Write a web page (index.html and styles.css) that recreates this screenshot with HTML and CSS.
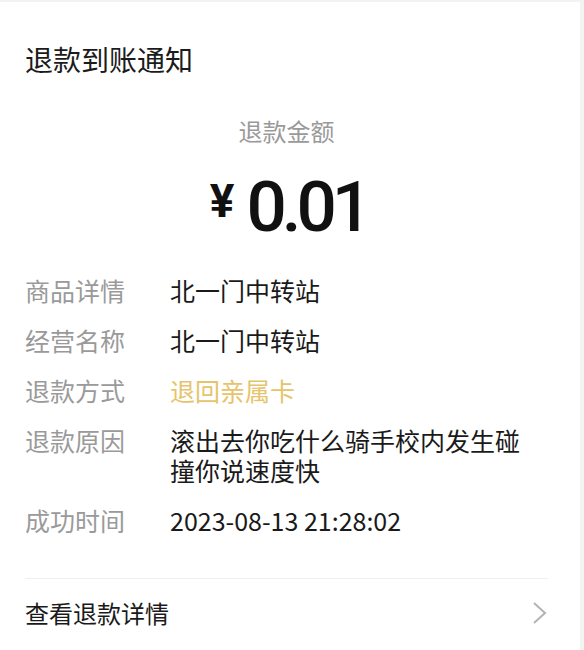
FILE: index.html
```html
<!DOCTYPE html>
<html>
<head>
    <meta charset="utf-8">
    <title>退款到账通知</title>
    <link rel="stylesheet" href="styles.css">
</head>
<body>
    <div class="card">
        <h2 class="title">退款到账通知</h2>

        <div class="amount-label">退款金额</div>
        <div class="amount">
            <span class="yen">¥</span>
            <span class="num">0.01</span>
        </div>

        <div class="rows">
            <div class="row">
                <div class="label">商品详情</div>
                <div class="value">北一门中转站</div>
            </div>
            <div class="row">
                <div class="label">经营名称</div>
                <div class="value">北一门中转站</div>
            </div>
            <div class="row">
                <div class="label">退款方式</div>
                <div class="value gold">退回亲属卡</div>
            </div>
            <div class="row">
                <div class="label">退款原因</div>
                <div class="value">滚出去你吃什么骑手校内发生碰撞你说速度快</div>
            </div>
            <div class="row">
                <div class="label">成功时间</div>
                <div class="value">2023-08-13 21:28:02</div>
            </div>
        </div>

        <div class="footer">
            <span>查看退款详情</span>
            <svg class="arrow" width="16" height="24" viewBox="0 0 16 24">
                <polyline points="2,2 13,12 2,22" fill="none" stroke="#b3b3b3" stroke-width="2"/>
            </svg>
        </div>
    </div>
</body>
</html>
```

FILE: styles.css
```css
body {
    margin: 0;
    background-color: #f3f3f3;
    font-family: "Noto Sans CJK SC", "Noto Sans", sans-serif;
}

.card {
    width: 580px;
    height: 648px;
    margin-top: 2px;
    background: #ffffff;
    box-sizing: border-box;
    padding: 37px 32px 0 25px;
}

.title {
    margin: 0;
    font-size: 28px;
    font-weight: normal;
    line-height: 40px;
    color: #1b1b1b;
}

.amount-label {
    margin-top: 37px;
    text-align: center;
    font-size: 24px;
    line-height: 30px;
    color: #9a9a9a;
}

.amount {
    display: flex;
    justify-content: center;
    align-items: center;
    height: 80px;
    margin-top: 21px;
    color: #111;
    font-family: Roboto, "Liberation Sans", sans-serif;
    font-weight: 500;
    padding-left: 4px;
}

.yen {
    font-size: 46px;
    font-weight: 700;
    line-height: 46px;
    margin-right: 12px;
    margin-bottom: 12px;
}

.num {
    font-size: 71px;
    line-height: 80px;
    letter-spacing: -5px;
}

.rows {
    margin-top: 28px;
}

.row {
    display: flex;
    font-size: 25px;
    line-height: 30px;
    margin-bottom: 20px;
}

.label {
    width: 145px;
    flex-shrink: 0;
    color: #9a9a9a;
}

.value {
    width: 372px;
    color: #1a1a1a;
}

.gold {
    color: #e6c46c;
}

.footer {
    display: flex;
    justify-content: space-between;
    align-items: center;
    margin-top: 43px;
    padding-top: 19px;
    border-top: 1px solid #efefef;
    font-size: 24px;
    line-height: 30px;
    color: #1a1a1a;
}

.arrow {
    margin-right: 0;
}
```
